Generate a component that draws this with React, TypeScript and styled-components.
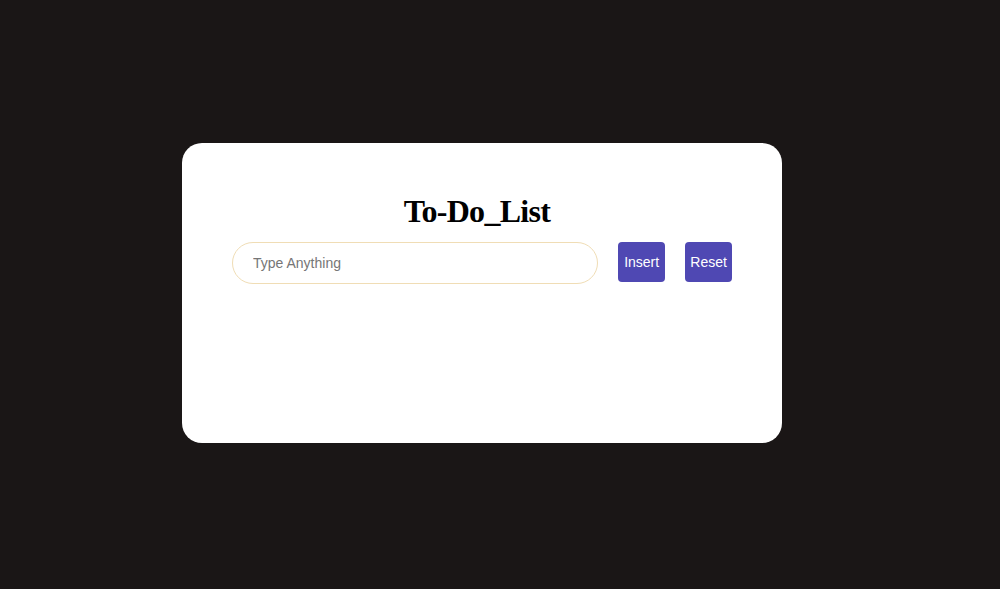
import React, { useState } from "react";
import styled, { createGlobalStyle } from "styled-components";

const Global = createGlobalStyle`
  html, body { margin: 0; padding: 0; background: #1a1616; }
  body { width: 1000px; height: 589px; overflow: hidden; }
`;

const Page = styled.div`
  width: 1000px;
  height: 589px;
  display: flex;
  align-items: flex-start;
  justify-content: center;
  padding-top: 143px;
  box-sizing: border-box;
  padding-right: 36px;
`;

const Card = styled.div`
  width: 600px;
  height: 300px;
  background: #ffffff;
  border-radius: 20px;
  box-sizing: border-box;
  padding: 50px 50px 0;
  display: flex;
  flex-direction: column;
`;

const Title = styled.h1`
  margin: 0 0 13px;
  font-family: "Liberation Serif", "Times New Roman", serif;
  font-weight: bold;
  font-size: 32px;
  letter-spacing: -0.7px;
  line-height: 36px;
  text-align: center;
  color: #000;
  padding-right: 10px;
`;

const Row = styled.div`
  display: flex;
  align-items: flex-start;
`;

const Input = styled.input`
  width: 367px;
  height: 42px;
  box-sizing: border-box;
  border: 1px solid #f0ddb5;
  border-radius: 21px;
  padding: 0 20px;
  font-family: "Liberation Sans", Arial, sans-serif;
  font-size: 14px;
  outline: none;
  &::placeholder { color: #767676; }
`;

const Button = styled.button<{ $ml: number }>`
  margin-left: ${(p) => p.$ml}px;
  width: 47px;
  height: 40px;
  border: none;
  border-radius: 4px;
  background: #4f48b3;
  color: #fff;
  font-family: "Liberation Sans", Arial, sans-serif;
  font-size: 14px;
  padding: 0;
  cursor: pointer;
`;

export default function App() {
  const [v, setV] = useState("");
  return (
    <>
      <Global />
      <Page>
        <Card>
          <Title>To-Do_List</Title>
          <Row>
            <Input placeholder="Type Anything" value={v} onChange={(e) => setV(e.target.value)} />
            <Button $ml={20}>Insert</Button>
            <Button $ml={20}>Reset</Button>
          </Row>
        </Card>
      </Page>
    </>
  );
}
